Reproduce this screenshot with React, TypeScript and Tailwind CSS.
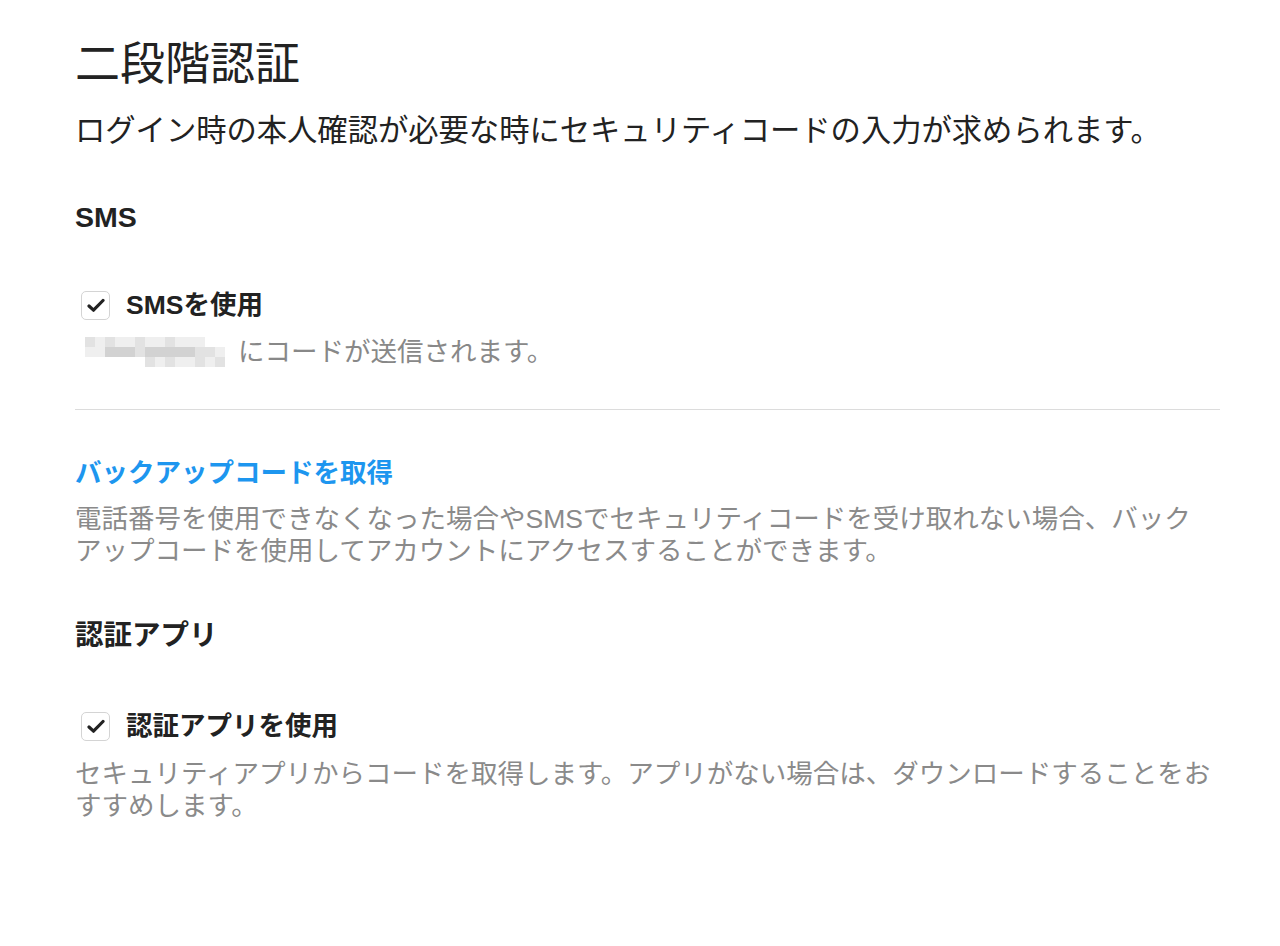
import React from "react";

const font = "font-['Liberation_Sans','Noto_Sans_CJK_JP',sans-serif]";

// pixelated phone number mosaic, 14 cols x 3 rows
const L = "bg-[#efefef]";
const M = "bg-[#e2e2e2]";
const D = "bg-[#d2d2d2]";
const W = "bg-transparent";
const mosaic: string[][] = [
  [M, L, M, L, L, M, L, L, M, L, L, L, W, W],
  [L, L, D, D, D, M, D, D, D, D, D, M, M, L],
  [W, W, W, W, W, W, M, L, M, L, L, M, L, M],
];

function Check() {
  return (
    <span className="flex h-[29px] w-[29px] shrink-0 items-center justify-center rounded-[5px] border-[1.5px] border-[#d4d4d4] bg-white">
      <svg width="18" height="15" viewBox="0 0 18 15" fill="none">
        <path d="M2 8 L6.5 12.2 L16 2.5" stroke="#222" strokeWidth="3.2" strokeLinecap="round" strokeLinejoin="round" />
      </svg>
    </span>
  );
}

function CheckRow({ label }: { label: string }) {
  return (
    <div className="flex h-[36px] items-center pl-[6px]">
      <Check />
      <span className="ml-[16px] text-[26.5px] leading-[36px] font-bold text-[#222]">{label}</span>
    </div>
  );
}

export default function App() {
  return (
    <div className={`min-h-screen bg-white ${font}`}>
      <div className="w-[1145px] pl-[75px] pt-[39px] box-content">
        <h1 className="text-[45px] leading-[52px] font-normal text-[#222]">二段階認証</h1>
        <p className="mt-[20px] text-[30.3px] leading-[40px] text-[#222]">
          ログイン時の本人確認が必要な時にセキュリティコードの入力が求められます。
        </p>

        <h2 className="mt-[48px] text-[28.5px] leading-[36px] font-bold text-[#222]">SMS</h2>
        <div className="mt-[52px]">
          <CheckRow label="SMSを使用" />
        </div>
        <div className="mt-[12px] flex h-[34px] items-center">
          <div className="ml-[10px] grid grid-cols-[repeat(14,10px)] grid-rows-[repeat(3,10px)]">
            {mosaic.flat().map((c, i) => (
              <span key={i} className={c} />
            ))}
          </div>
          <span className="ml-[13px] text-[26.5px] leading-[34px] text-[#888]">にコードが送信されます。</span>
        </div>

        <div className="mt-[40px] border-t border-[#dcdcdc]" />

        <a className="mt-[45px] block text-[26.5px] leading-[36px] font-bold text-[#1d96ef]">
          バックアップコードを取得
        </a>
        <p className="mt-[12px] text-[26.5px] leading-[32px] text-[#8a8a8a]">
          電話番号を使用できなくなった場合やSMSでセキュリティコードを受け取れない場合、バック
          <br />
          アップコードを使用してアカウントにアクセスすることができます。
        </p>

        <h2 className="mt-[50px] text-[28.5px] leading-[36px] font-bold text-[#222]">認証アプリ</h2>
        <div className="mt-[55px]">
          <CheckRow label="認証アプリを使用" />
        </div>
        <p className="mt-[14px] text-[26.5px] leading-[32px] text-[#8a8a8a]">
          セキュリティアプリからコードを取得します。アプリがない場合は、ダウンロードすることをお
          <br />
          すすめします。
        </p>
      </div>
    </div>
  );
}
